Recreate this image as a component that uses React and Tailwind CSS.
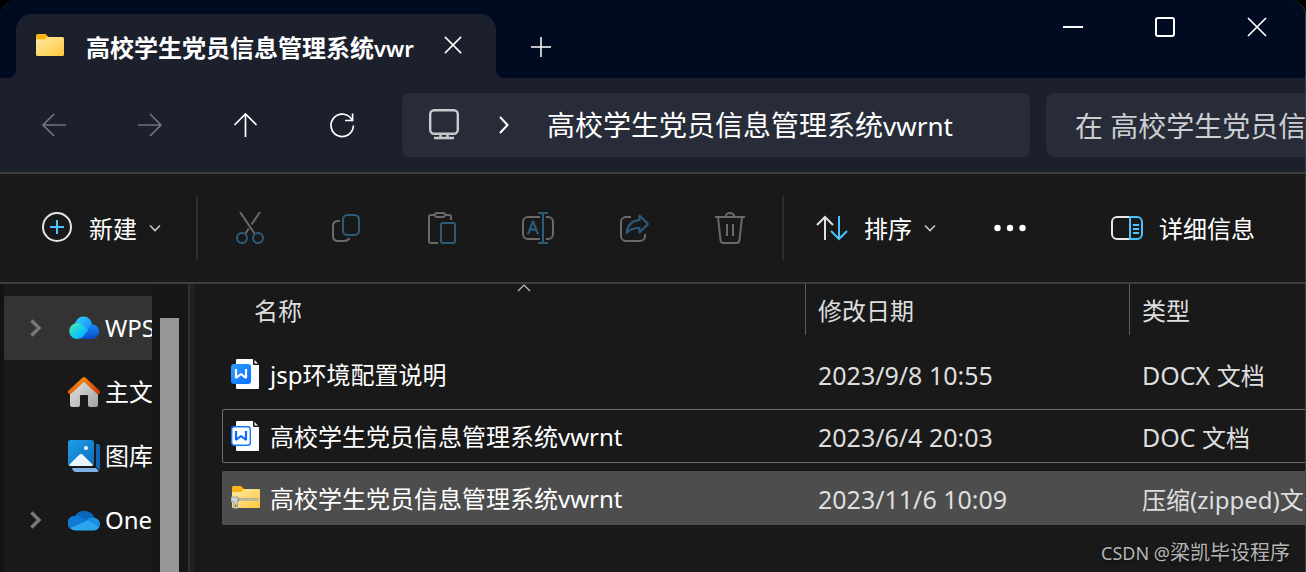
import React from "react";

const DIM = "#6a6a6a";
const DIM_BLUE = "#2b5d7a";
const BLUE = "#4cc2ff";

function FolderIcon() {
  return (
    <svg width="28" height="26" viewBox="0 0 28 26" className="shrink-0" aria-hidden="true">
      <defs>
        <linearGradient id="folder" x1="0" y1="0" x2="1" y2="1">
          <stop offset="0" stopColor="#ffe9a6" />
          <stop offset="1" stopColor="#ffc93c" />
        </linearGradient>
      </defs>
      <path d="M0 2.500Q0 1 1.500 1H9.500L12.500 4H16V12H0Z" fill="#fcb316" />
      <path d="M0 7.500Q0 6.500 1 6.500H9L11.500 4H26.500Q28 4 28 5.500V21.500Q28 23 26.500 23H1.500Q0 23 0 21.500Z" fill="url(#folder)" />
    </svg>
  );
}

function Cross({ size }) {
  return (
    <svg width={size} height={size} viewBox="0 0 20 20" fill="none" stroke="#fff" strokeWidth="1.700" aria-hidden="true">
      <path d="M1 1L19 19M19 1L1 19" />
    </svg>
  );
}

function Chevron() {
  return (
    <svg width="12" height="8" viewBox="0 0 12 8" fill="none" stroke="#c8c8c8" strokeWidth="1.600" aria-hidden="true">
      <path d="M1 1.500L6 6.500L11 1.500" />
    </svg>
  );
}

function ToolIcon({ children }) {
  return (
    <svg width="32" height="32" viewBox="0 0 32 32" fill="none" strokeWidth="2" className="shrink-0" aria-hidden="true">
      {children}
    </svg>
  );
}

const navButtons = [
  { label: "后退", color: "#6f737b", d: "M24 12H1.500M12 1L1 12L12 23" },
  { label: "前进", color: "#6f737b", d: "M0 12H22.500M12 1L23 12L12 23" },
  { label: "向上", color: "#ffffff", d: "M11.500 24V1.500M0.500 12L11.500 1L22.500 12" },
  { label: "刷新", color: "#ffffff", d: "M22.300 7.500A11.200 11.200 0 1 0 23.400 12.500M22.600 0.500V7.500H15" },
];

const tools = [
  {
    label: "剪切",
    icon: (
      <>
        <path d="M6 0L20.500 21.500M26 0L17.500 12.500M14.800 16.500L11.500 21.500" stroke={DIM} />
        <circle cx="8" cy="26" r="5" stroke={DIM_BLUE} />
        <circle cx="24" cy="26" r="5" stroke={DIM_BLUE} />
      </>
    ),
  },
  {
    label: "复制",
    icon: (
      <>
        <path d="M10 9H8Q3 9 3 14V24Q3 29 8 29H14Q18 29 19.500 26" stroke={DIM} />
        <rect x="13" y="3" width="16" height="20" rx="4.500" stroke={DIM_BLUE} />
      </>
    ),
  },
  {
    label: "粘贴",
    icon: (
      <>
        <path d="M12 31H5Q3 31 3 29V5Q3 3 5 3H9M19 3H23Q25 3 25 5V8" stroke={DIM} />
        <rect x="9" y="1" width="10" height="4" rx="2" stroke={DIM} />
        <rect x="15" y="11" width="14" height="20" rx="2" stroke={DIM_BLUE} />
      </>
    ),
  },
  {
    label: "重命名",
    icon: (
      <>
        <path d="M18 5H6A5 5 0 0 0 1 10V22A5 5 0 0 0 6 27H18M24 5H26A5 5 0 0 1 31 10V22A5 5 0 0 1 26 27H24" stroke={DIM} />
        <path d="M21 1V31M16 1H26M16 31H26" stroke={DIM_BLUE} />
        <text x="11" y="22" textAnchor="middle" fontSize="18" fill={DIM_BLUE} stroke={DIM_BLUE} strokeWidth="0.500" fontFamily="Noto Sans, sans-serif">A</text>
      </>
    ),
  },
  {
    label: "共享",
    icon: (
      <>
        <path d="M13 5H8A5 5 0 0 0 3 10V24A5 5 0 0 0 8 29H22A5 5 0 0 0 27 24V22" stroke={DIM} />
        <path d="M21.500 3.500L30 12L21.500 20.500V16C15 16 11 18 8.500 21C9.500 13 14 8.500 21.500 8Z" stroke={DIM_BLUE} strokeLinejoin="round" />
      </>
    ),
  },
  {
    label: "删除",
    icon: (
      <path d="M1 5H31M11.500 5A4.500 4 0 0 1 20.500 5M4 5L6.500 28Q7 31 9.500 31H22.500Q25 31 25.500 28L28 5M13 12V24M19 12V24" stroke={DIM} />
    ),
  },
];

function WpsCloud() {
  return (
    <svg width="32" height="32" viewBox="0 0 32 32" className="shrink-0" aria-hidden="true">
      <defs>
        <linearGradient id="wpsTop" x1="0" y1="0" x2="1" y2="1">
          <stop offset="0" stopColor="#2fd0ff" />
          <stop offset="1" stopColor="#1583f5" />
        </linearGradient>
        <linearGradient id="wpsLeft" x1="0" y1="0" x2="1" y2="1">
          <stop offset="0" stopColor="#54f0a0" />
          <stop offset="0.550" stopColor="#12c8f4" />
          <stop offset="1" stopColor="#0c9df5" />
        </linearGradient>
        <linearGradient id="wpsRight" x1="0" y1="0" x2="0" y2="1">
          <stop offset="0" stopColor="#1687f8" />
          <stop offset="1" stopColor="#0a4bc4" />
        </linearGradient>
      </defs>
      <path d="M7 13A8.500 8.500 0 0 1 24 13L17 22Z" fill="url(#wpsTop)" />
      <path d="M12 27L20 18.500Q22 12.500 25 12.500A7.300 7.300 0 0 1 23.500 27Z" fill="url(#wpsRight)" />
      <path d="M9 27A8 8 0 1 1 15.500 14Q18 16 20 18.500L15.500 24Q13 27 9 27Z" fill="url(#wpsLeft)" />
    </svg>
  );
}

function HomeIcon() {
  return (
    <svg width="32" height="32" viewBox="0 0 32 32" className="shrink-0" aria-hidden="true">
      <defs>
        <linearGradient id="wall" x1="0" y1="0" x2="1" y2="1">
          <stop offset="0" stopColor="#e6e6e6" />
          <stop offset="1" stopColor="#a2a2a2" />
        </linearGradient>
        <linearGradient id="roof" x1="0" y1="0" x2="1" y2="1">
          <stop offset="0" stopColor="#ff9a0a" />
          <stop offset="1" stopColor="#d63c08" />
        </linearGradient>
      </defs>
      <path d="M2 16L16 4L30 16V29Q30 31 28 31H22Q20 31 20 29V20Q20 19 19 19H13Q12 19 12 20V29Q12 31 10 31H4Q2 31 2 29Z" fill="url(#wall)" />
      <path d="M2 16L16 3L30 16" fill="none" stroke="url(#roof)" strokeWidth="4" strokeLinecap="round" strokeLinejoin="round" />
    </svg>
  );
}

function GalleryIcon() {
  return (
    <svg width="32" height="32" viewBox="0 0 32 32" className="shrink-0" aria-hidden="true">
      <defs>
        <linearGradient id="photo" x1="0" y1="0" x2="1" y2="1">
          <stop offset="0" stopColor="#1f9ee8" />
          <stop offset="1" stopColor="#0f6dba" />
        </linearGradient>
      </defs>
      <path d="M28 4H30Q32 4 32 6V30L28 27Z" fill="#1266b0" />
      <path d="M4 28H28L31 31Q30 32 28 32H8Q5 32 4 28Z" fill="#7fb0e6" />
      <rect width="26" height="26" rx="2.500" fill="url(#photo)" />
      <path d="M1 25L11.500 14.500Q13 13.300 14.500 14.500L25 25Q24.500 26 23 26H3Q1.500 26 1 25Z" fill="#eaf5ff" />
      <circle cx="18" cy="8" r="2" fill="#fff" />
    </svg>
  );
}

function OneDriveIcon() {
  return (
    <svg width="32" height="32" viewBox="0 0 32 32" className="shrink-0" aria-hidden="true">
      <path d="M7 12A10.500 9.500 0 0 1 26.500 14L20 19Z" fill="#0a64b8" />
      <path d="M7 12Q11 11 15 14L22 18L3 25A7 7 0 0 1 7 12Z" fill="#0f7ad4" />
      <path d="M18 17Q20 13 26 13.500Q32 15 32 20Q32 22 31 24Z" fill="#1b8fe0" />
      <path d="M2 24L20 16.500L31 23.500Q29 26.500 26 26.500H8Q4 26.500 2 24Z" fill="#2ba6ee" />
    </svg>
  );
}

const places = [
  { name: "WPS云盘", icon: <WpsCloud />, expandable: true, selected: true },
  { name: "主文件夹", icon: <HomeIcon /> },
  { name: "图库", icon: <GalleryIcon /> },
  { name: "OneDrive", icon: <OneDriveIcon />, expandable: true },
];

function DocIcon({ filled }) {
  return (
    <svg width="30" height="32" viewBox="0 0 30 32" className="shrink-0" aria-hidden="true">
      <defs>
        <linearGradient id="docx" x1="0" y1="0" x2="1" y2="1">
          <stop offset="0" stopColor="#2ea0ff" />
          <stop offset="1" stopColor="#0a6cff" />
        </linearGradient>
      </defs>
      <path d="M5 2Q5 1 6 1H22V6Q22 7 23 7H28V30Q28 31 27 31H6Q5 31 5 30Z" fill="#fbfcfe" />
      <path d="M23.500 2L27 5.500H23.500Z" fill="#fbfcfe" />
      {filled ? (
        <rect x="0" y="6" width="20" height="20" rx="3" fill="url(#docx)" />
      ) : (
        <rect x="0.700" y="6.700" width="18.600" height="18.600" rx="2.500" fill="#fff" stroke="#1677ff" strokeWidth="1.400" />
      )}
      <path d="M5 11V20L10 16L15 20V11" fill="none" stroke={filled ? "#fff" : "#0a6cff"} strokeWidth="2.200" strokeLinejoin="bevel" />
    </svg>
  );
}

function ZipIcon() {
  return (
    <svg width="30" height="32" viewBox="0 0 30 32" className="shrink-0" aria-hidden="true">
      <path d="M1 5.500Q1 4 2.500 4H10L13 7H17V13H1Z" fill="#fcb316" />
      <path d="M1 10H10L13 7H28Q29 7 29 8V25Q29 26 28 26H2Q1 26 1 25Z" fill="url(#folder)" />
      <path d="M7 17.500H28" stroke="#8d8468" strokeWidth="3" />
      <path d="M7.500 17H28M8.500 18.300H28" stroke="#f6ecd0" strokeWidth="1.300" strokeDasharray="1 1" />
      <path d="M0 15H7V19.500H6.500V26.500H3V20H0Z" fill="#cfd0d2" stroke="#8a8a8a" strokeWidth="0.700" />
      <path d="M4.200 22.500H5.400V25H4.200Z" fill="#666" />
    </svg>
  );
}

const files = [
  { name: "jsp环境配置说明", date: "2023/9/8 10:55", ext: "DOCX ", type: "文档", icon: <DocIcon filled />, style: "border-transparent" },
  { name: "高校学生党员信息管理系统vwrnt", date: "2023/6/4 20:03", ext: "DOC ", type: "文档", icon: <DocIcon />, style: "border-[#6b6b6b]" },
  { name: "高校学生党员信息管理系统vwrnt", date: "2023/11/6 10:09", ext: "", type: "压缩(zipped)文件夹", icon: <ZipIcon />, style: "border-[#4d4d4d] bg-[#4d4d4d]" },
];

const columns = "grid grid-cols-[584px_324px_minmax(176px,1fr)]";

export default function App() {
  return (
    <div className="h-screen bg-black">
      <div className="relative flex h-full flex-col overflow-hidden rounded-t-2xl border-r border-[#3a3f48] bg-[#191919] font-['Noto_Sans','Noto_Sans_CJK_SC',sans-serif] text-2xl leading-8 text-white">
        <header className="flex h-[78px] shrink-0 bg-[#1b202c]">
          <div className="w-4 rounded-br-lg bg-[#000a20]" />
          <div className="w-[480px] bg-linear-to-b from-[#000a20] from-50% to-[#1b202c] to-50% pt-[14px]">
            <div className="flex h-16 items-center rounded-t-2xl bg-[#1b202c] pl-5">
              <FolderIcon />
              <span className="ml-[22px] w-[328px] overflow-hidden pt-1 font-bold whitespace-nowrap">
                高校学生党员信息管理系统<span className="text-[22px] font-semibold">vwr</span>
              </span>
              <button aria-label="关闭标签页" className="flex h-16 w-[78px] items-center justify-center pb-0.5">
                <Cross size={18} />
              </button>
            </div>
          </div>
          <div className="flex flex-1 items-start justify-between rounded-bl-lg bg-[#000a20] pr-0.5">
            <button aria-label="新建标签页" className="flex h-[94px] w-[90px] items-center justify-center">
              <svg width="20" height="20" viewBox="0 0 20 20" stroke="#fff" strokeWidth="1.500" aria-hidden="true">
                <path d="M10 0V20M0 10H20" />
              </svg>
            </button>
            <div className="flex">
              <button aria-label="最小化" className="flex h-[54px] w-[92px] items-center justify-center">
                <svg width="20" height="20" stroke="#fff" strokeWidth="2" aria-hidden="true"><path d="M0 10H20" /></svg>
              </button>
              <button aria-label="最大化" className="flex h-[54px] w-[92px] items-center justify-center">
                <svg width="20" height="20" fill="none" stroke="#fff" strokeWidth="2" aria-hidden="true"><rect x="1" y="1" width="18" height="18" rx="2" /></svg>
              </button>
              <button aria-label="关闭" className="flex h-[54px] w-[92px] items-center justify-center">
                <Cross size={20} />
              </button>
            </div>
          </div>
        </header>

        <nav className="flex h-24 shrink-0 items-center border-b-2 border-[#3e3e3e] bg-[#1b202c] pl-[6px] text-[28px]">
          {navButtons.map((b) => (
            <button key={b.label} aria-label={b.label} className="flex h-16 w-24 shrink-0 items-center justify-center">
              <svg width="24" height="24" viewBox="0 0 24 24" fill="none" stroke={b.color} strokeWidth="1.700" className="overflow-visible" aria-hidden="true">
                <path d={b.d} />
              </svg>
            </button>
          ))}
          <div className="ml-3 flex h-16 min-w-0 flex-1 items-center rounded-lg bg-[#272c38] pl-[27px]">
            <svg width="30" height="32" viewBox="0 0 30 32" fill="none" stroke="#c9cacd" strokeWidth="2.400" className="shrink-0" aria-hidden="true">
              <rect x="1.200" y="1.200" width="27.600" height="23.600" rx="4" />
              <path d="M11.500 25V29M18.500 25V29M5 29H25" />
            </svg>
            <svg width="10" height="18" viewBox="0 0 10 18" fill="none" stroke="#fff" strokeWidth="2" className="ml-10 shrink-0" aria-hidden="true">
              <path d="M1 1L8.500 9L1 17" />
            </svg>
            <button className="ml-[38px] whitespace-nowrap">
              高校学生党员信息管理系统<span className="text-[26px]">vwrnt</span>
            </button>
          </div>
          <input
            type="text"
            aria-label="搜索"
            placeholder="在 高校学生党员信息管理系统vwrnt 中搜索"
            className="ml-4 h-16 w-[259px] shrink-0 rounded-l-lg bg-[#272c38] pt-0.5 pl-[29px] outline-none placeholder:text-[#cdced1]"
          />
        </nav>

        <div role="toolbar" className="flex h-[110px] shrink-0 items-center border-b-2 border-[#3e3e3e] pr-[50px] pl-[41px] whitespace-nowrap">
          <button className="flex items-center">
            <ToolIcon>
              <circle cx="16" cy="15" r="14" stroke="#e6e6e6" />
              <path d="M16 8V22M9 15H23" stroke={BLUE} />
            </ToolIcon>
            <span className="mr-3 ml-4 pt-0.5">新建</span>
            <Chevron />
          </button>
          <div className="ml-[35px] h-16 w-0.5 bg-[#2e2e2e]" />
          <div className="mx-1 flex">
            {tools.map((t) => (
              <button key={t.label} aria-label={t.label} disabled className="flex h-16 w-24 items-center justify-center">
                <ToolIcon>{t.icon}</ToolIcon>
              </button>
            ))}
          </div>
          <div className="h-16 w-0.5 bg-[#2e2e2e]" />
          <button className="ml-8 flex items-center">
            <ToolIcon>
              <path d="M9 28V5M1 13L9 5L17 13" stroke="#e0e0e0" />
              <path d="M23 4V27M15 19L23 27L31 19" stroke={BLUE} />
            </ToolIcon>
            <span className="mr-3 ml-4 pt-0.5">排序</span>
            <Chevron />
          </button>
          <button aria-label="查看更多" className="ml-[58px] flex h-16 items-center">
            <svg width="32" height="8" viewBox="0 0 32 8" fill="#fff" aria-hidden="true">
              <circle cx="3.500" cy="4" r="3.200" />
              <circle cx="16" cy="4" r="3.200" />
              <circle cx="28.500" cy="4" r="3.200" />
            </svg>
          </button>
          <button className="ml-auto flex items-center">
            <ToolIcon>
              <path d="M19 5H6A5 5 0 0 0 1 10V22A5 5 0 0 0 6 27H19" stroke="#e6e6e6" />
              <path d="M19 5H26A5 5 0 0 1 31 10V22A5 5 0 0 1 26 27H19ZM22 13H28M22 17H28M22 21H28" stroke={BLUE} />
            </ToolIcon>
            <span className="ml-4 pt-0.5">详细信息</span>
          </button>
        </div>

        <div className="flex min-h-0 flex-1">
          <aside className="flex w-[194px] shrink-0 border-l-4 border-[#131313] bg-[#161616]">
            <ul className="w-[148px] overflow-hidden bg-[#191919] pt-3">
              {places.map((p) => (
                <li key={p.name}>
                  <a
                    href="#"
                    className={p.selected ? "flex h-16 items-center overflow-hidden rounded-l-xs bg-[#333333] whitespace-nowrap" : "flex h-16 items-center overflow-hidden whitespace-nowrap"}
                  >
                    <span className="flex w-16 shrink-0 items-center justify-center">
                      {p.expandable && (
                        <svg width="12" height="18" viewBox="0 0 12 18" fill="none" stroke="#777" strokeWidth="3.400" aria-hidden="true">
                          <path d="M1.500 1.500L9 9L1.500 16.500" />
                        </svg>
                      )}
                    </span>
                    {p.icon}
                    <span className="ml-[5px]">{p.name}</span>
                  </a>
                </li>
              ))}
            </ul>
            <div className="ml-2 w-[19px] pt-[34px]">
              <div className="h-full bg-[#969696]" />
            </div>
            <div className="ml-auto w-1.5 border-l-2 border-[#303030] bg-[#202020]" />
          </aside>

          <main className="min-w-0 flex-1 overflow-hidden pl-7">
            <table className="block">
              <thead className="block">
                <tr className={`${columns} h-[51px] text-left text-[#dedede]`}>
                  <th className="relative ml-5 border-r border-[#5c5c5c] pt-[11px] pl-3 font-normal">
                    名称
                    <svg width="14" height="8" viewBox="0 0 14 8" fill="none" stroke="#c0c0c0" strokeWidth="1.200" className="absolute top-0 left-1/2 -translate-x-1/2" aria-hidden="true">
                      <path d="M1 7L7 1L13 7" />
                    </svg>
                  </th>
                  <th className="border-r border-[#5c5c5c] pt-[11px] pl-3 font-normal">修改日期</th>
                  <th className="pt-[11px] pl-3 font-normal">类型</th>
                </tr>
              </thead>
              <tbody className="flex flex-col gap-2 pt-3">
                {files.map((f) => (
                  <tr key={f.date} className={`${columns} h-[54px] items-center rounded-l-xs border border-r-0 whitespace-nowrap ${f.style}`}>
                    <td className="flex items-center gap-[9px] pl-2">
                      {f.icon}
                      <span className="pt-0.5">{f.name}</span>
                    </td>
                    <td className="pt-0.5 pl-[11px] text-[25px] text-[#dedede]">{f.date}</td>
                    <td className="overflow-hidden pt-0.5 pl-[11px] text-[#dedede]">
                      <span className="text-[25px] whitespace-pre">{f.ext}</span>
                      {f.type}
                    </td>
                  </tr>
                ))}
              </tbody>
            </table>
          </main>
        </div>

        <p className="absolute right-[15px] bottom-[5px] text-xl text-[#b4b4b4] text-shadow-md">
          <span className="text-lg">CSDN @</span>梁凯毕设程序
        </p>
      </div>
    </div>
  );
}
